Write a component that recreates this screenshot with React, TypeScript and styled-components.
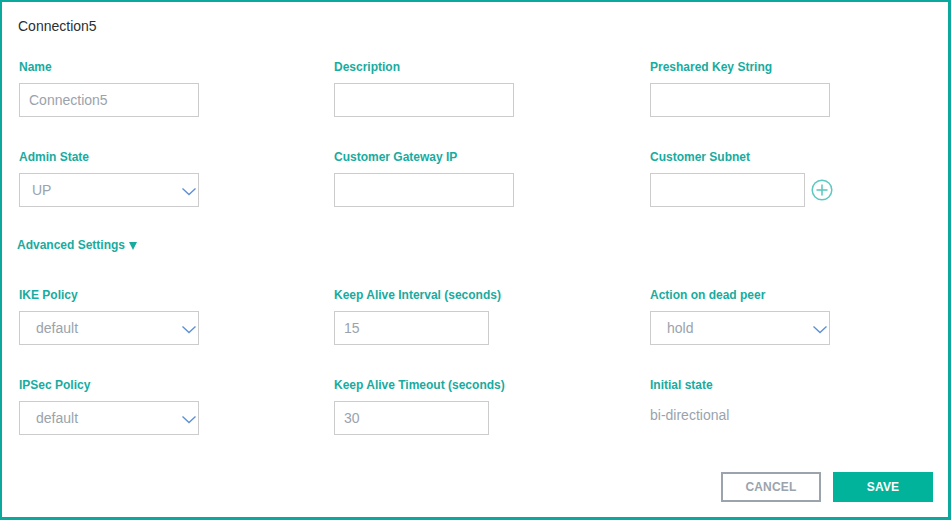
import React from 'react'
import styled, { createGlobalStyle } from 'styled-components'

const GlobalStyle = createGlobalStyle`
  html, body {
    margin: 0;
    padding: 0;
    background: #fff;
    font-family: "Liberation Sans", Arial, sans-serif;
  }
`

const Panel = styled.div`
  box-sizing: border-box;
  width: 951px;
  height: 520px;
  border: 2px solid #0ba99d;
  border-right-width: 3px;
  border-bottom-width: 3px;
  padding: 16px 15px 0 17px;
  display: flex;
  flex-direction: column;
`

const Title = styled.div`
  font-size: 14px;
  line-height: 16px;
  color: #2b2f33;
  margin-left: -1px;
  margin-bottom: 25px;
`

const Grid = styled.div`
  display: grid;
  grid-template-columns: 315px 316px 1fr;
  row-gap: 32px;
`

const Field = styled.div`
  display: flex;
  flex-direction: column;
`

const Label = styled.div`
  font-size: 12px;
  line-height: 16px;
  font-weight: 700;
  color: #18aba0;
  margin-bottom: 8px;
`

const Box = styled.div<{ $w?: number }>`
  box-sizing: border-box;
  width: ${(p) => p.$w ?? 180}px;
  height: 34px;
  border: 1px solid #cccccc;
  display: flex;
  align-items: center;
  justify-content: space-between;
  font-size: 14px;
  color: #9aa3ad;
  background: #fff;
`

const Text = styled.span<{ $pad: number }>`
  padding-left: ${(p) => p.$pad}px;
`

const Chevron = styled.svg`
  margin-right: 1px;
  margin-top: 3px;
`

const InlineRow = styled.div`
  display: flex;
  align-items: center;
  gap: 6px;
`

const PlainValue = styled.div`
  font-size: 14px;
  line-height: 28px;
  height: 34px;
  color: #9aa3ad;
`

const Advanced = styled.div`
  display: flex;
  align-items: center;
  gap: 4px;
  font-size: 12px;
  line-height: 16px;
  font-weight: 700;
  color: #18aba0;
  margin: 30px 0 34px -2px;
`

const Triangle = styled.span`
  width: 0;
  height: 0;
  border-left: 4px solid transparent;
  border-right: 4px solid transparent;
  border-top: 8px solid #18aba0;
  margin-top: 1px;
`

const Footer = styled.div`
  display: flex;
  justify-content: flex-end;
  gap: 12px;
  margin-top: 37px;
`

const Button = styled.button<{ $primary?: boolean }>`
  box-sizing: border-box;
  width: 100px;
  height: 30px;
  font-family: "Liberation Sans", Arial, sans-serif;
  font-size: 12px;
  font-weight: 700;
  letter-spacing: 0.2px;
  cursor: pointer;
  border: 2px solid ${(p) => (p.$primary ? '#00b39a' : '#9ba4ac')};
  background: ${(p) => (p.$primary ? '#00b39a' : '#fff')};
  color: ${(p) => (p.$primary ? '#fff' : '#9ba4ac')};
`

const Down = () => (
  <Chevron width="16" height="10" viewBox="0 0 16 10">
    <polyline points="1.5,1.5 8,7.5 14.5,1.5" fill="none" stroke="#5e90d4" strokeWidth="1.4" />
  </Chevron>
)

const Input = ({ value = '', w, pad = 9 }: { value?: string; w?: number; pad?: number }) => (
  <Box $w={w}>
    <Text $pad={pad}>{value}</Text>
  </Box>
)

const Select = ({ value, pad }: { value: string; pad: number }) => (
  <Box>
    <Text $pad={pad}>{value}</Text>
    <Down />
  </Box>
)

const Plus = () => (
  <svg width="22" height="22" viewBox="0 0 22 22">
    <circle cx="11" cy="11" r="9.8" fill="none" stroke="#5fc9c1" strokeWidth="1.5" />
    <line x1="11" y1="5.5" x2="11" y2="16.5" stroke="#5fc9c1" strokeWidth="1.6" />
    <line x1="5.5" y1="11" x2="16.5" y2="11" stroke="#5fc9c1" strokeWidth="1.6" />
  </svg>
)

export default function App() {
  return (
    <>
      <GlobalStyle />
      <Panel>
        <Title>Connection5</Title>
        <Grid>
          <Field>
            <Label>Name</Label>
            <Input value="Connection5" />
          </Field>
          <Field>
            <Label>Description</Label>
            <Input />
          </Field>
          <Field>
            <Label>Preshared Key String</Label>
            <Input />
          </Field>
          <Field>
            <Label>Admin State</Label>
            <Select value="UP" pad={12} />
          </Field>
          <Field>
            <Label>Customer Gateway IP</Label>
            <Input />
          </Field>
          <Field>
            <Label>Customer Subnet</Label>
            <InlineRow>
              <Input w={155} />
              <Plus />
            </InlineRow>
          </Field>
        </Grid>
        <Advanced>
          Advanced Settings
          <Triangle />
        </Advanced>
        <Grid>
          <Field>
            <Label>IKE Policy</Label>
            <Select value="default" pad={16} />
          </Field>
          <Field>
            <Label>Keep Alive Interval (seconds)</Label>
            <Input value="15" w={155} />
          </Field>
          <Field>
            <Label>Action on dead peer</Label>
            <Select value="hold" pad={16} />
          </Field>
          <Field>
            <Label>IPSec Policy</Label>
            <Select value="default" pad={16} />
          </Field>
          <Field>
            <Label>Keep Alive Timeout (seconds)</Label>
            <Input value="30" w={155} />
          </Field>
          <Field>
            <Label>Initial state</Label>
            <PlainValue>bi-directional</PlainValue>
          </Field>
        </Grid>
        <Footer>
          <Button>CANCEL</Button>
          <Button $primary>SAVE</Button>
        </Footer>
      </Panel>
    </>
  )
}
